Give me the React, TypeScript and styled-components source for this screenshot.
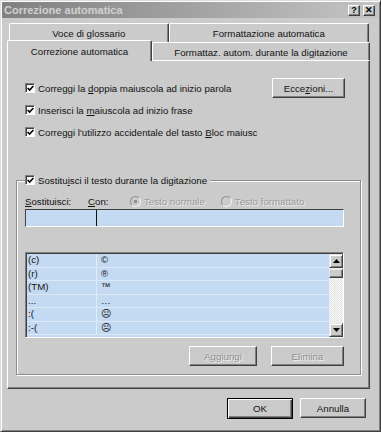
import styled, { createGlobalStyle } from 'styled-components';

const face = '#cbcbcb';
const shadow = '#808080';
const dark = '#404040';
const field = '#c4daf2';

const replacements = [
  { from: '(c)', to: '©' },
  { from: '(r)', to: '®' },
  { from: '(TM)', to: '™' },
  { from: '...', to: '…' },
  { from: ':(', to: '☹' },
  { from: ':-(', to: '☹' },
];

const GlobalStyle = createGlobalStyle`
  html, body {
    margin: 0;
    padding: 0;
    background: ${face};
  }
  body {
    font-family: "Liberation Sans", Arial, sans-serif;
    font-size: 9.7px;
    color: #111;
  }
  * {
    box-sizing: border-box;
  }
`;

const Window = styled.div`
  width: 381px;
  height: 432px;
  background: ${face};
  border: 1px solid;
  border-color: #dcdcdc ${dark} ${dark} #dcdcdc;
  box-shadow: inset 1px 1px #fff, inset -1px -1px ${shadow};
  padding: 1px;
  display: flex;
  flex-direction: column;
`;

const TitleBar = styled.div`
  height: 16px;
  display: flex;
  align-items: center;
  justify-content: space-between;
  padding: 0 4px 0 2px;
  background: linear-gradient(to right, #808080, #c4c4c4);
  color: #d2d2d2;
  font-size: 11px;
  font-weight: 700;
`;

const TitleButtons = styled.div`
  display: flex;
  gap: 3px;
`;

const TitleButton = styled.span`
  width: 12px;
  height: 11px;
  display: flex;
  align-items: center;
  justify-content: center;
  background: ${face};
  border: 1px solid;
  border-color: #fff ${dark} ${dark} #fff;
  box-shadow: inset -1px -1px ${shadow};
  color: #000;
  font-size: 9px;
  font-weight: 700;
  line-height: 1;
`;

const Body = styled.div`
  flex: 1;
  display: flex;
  flex-direction: column;
  padding: 5px 9px 0 5px;
`;

const TabRow = styled.div<{ $front?: boolean }>`
  display: flex;
  align-items: flex-end;
  height: ${p => (p.$front ? 21 : 19)}px;
  margin: ${p => (p.$front ? '-2px 0 -1px 0' : '0 1px 0 2px')};
`;

const Tab = styled.div<{ $width: number; $selected?: boolean }>`
  width: ${p => p.$width}px;
  height: ${p => (p.$selected ? 21 : 19)}px;
  display: flex;
  align-items: center;
  justify-content: center;
  padding-top: ${p => (p.$selected ? 1 : 0)}px;
  background: ${face};
  border-top: 1px solid #fff;
  border-left: 1px solid #fff;
  border-right: 1px solid ${dark};
  border-radius: 2px 2px 0 0;
  box-shadow: inset -1px 0 ${shadow};
  position: ${p => (p.$selected ? 'relative' : 'static')};
  z-index: ${p => (p.$selected ? 1 : 'auto')};
`;

const Panel = styled.div`
  height: 329px;
  border: 1px solid;
  border-color: #fff ${dark} ${dark} #fff;
  box-shadow: inset -1px -1px ${shadow};
  display: flex;
  flex-direction: column;
`;

const Options = styled.div`
  padding: 16px 24px 0 17px;
  display: flex;
  flex-direction: column;
`;

const OptionRow = styled.div`
  height: 22px;
  display: flex;
  align-items: center;
  justify-content: space-between;
`;

const CheckLabel = styled.label`
  display: flex;
  align-items: center;
  white-space: nowrap;
`;

const CheckBox = styled.span`
  width: 10px;
  height: 10px;
  flex: none;
  display: inline-flex;
  align-items: center;
  justify-content: center;
  background: #fff;
  border: 1px solid;
  border-color: ${shadow} #fff #fff ${shadow};
  box-shadow: inset 1px 1px ${dark};
  margin-right: 3px;
`;

const Key = styled.u`
  text-decoration: underline;
`;

const Button = styled.button<{ $width: number; $default?: boolean }>`
  width: ${p => p.$width}px;
  height: ${p => (p.$default ? 21 : 20)}px;
  padding: 0;
  background: ${face};
  font-family: inherit;
  font-size: 9.7px;
  color: #111;
  border: 1px solid;
  border-color: ${p => (p.$default ? '#000' : `#fff ${dark} ${dark} #fff`)};
  box-shadow: ${p =>
    p.$default
      ? `inset 1px 1px #fff, inset -1px -1px ${dark}, inset -2px -2px ${shadow}`
      : `inset -1px -1px ${shadow}`};
  &:disabled {
    color: #8e8e8e;
    text-shadow: 1px 1px #f4f4f4;
  }
`;

const Group = styled.fieldset`
  margin: 31px 8px 0 8px;
  padding: 0 16px 8px 8px;
  border: 1px solid #8c8c8c;
  box-shadow: 1px 1px #fff, inset 1px 1px #fff;
  display: flex;
  flex-direction: column;
`;

const Legend = styled.legend`
  padding: 0 3px 0 0;
  height: 12px;
  background: ${face};
  display: flex;
  align-items: center;
`;

const LabelRow = styled.div`
  margin-top: 9px;
  height: 12px;
  display: flex;
  align-items: center;
  white-space: nowrap;
`;

const FieldLabel = styled.span<{ $width: number }>`
  width: ${p => p.$width}px;
`;

const Radio = styled.span<{ $on?: boolean }>`
  display: flex;
  align-items: center;
  color: #9a9a9a;
  text-shadow: 1px 1px #eee;
  margin-right: 16px;
  &::before {
    content: '';
    width: 9px;
    height: 9px;
    margin-right: 3px;
    border-radius: 50%;
    border: 1px solid #8e8e8e;
    border-right-color: #f2f2f2;
    border-bottom-color: #f2f2f2;
    background: radial-gradient(circle, ${p => (p.$on ? '#8e8e8e 1.6px' : 'transparent 0')}, ${face} 2px);
  }
`;

const Inputs = styled.div`
  margin-top: 2px;
  height: 18px;
  display: flex;
  background: ${field};
  border-top: 1px solid ${dark};
  border-left: 1px solid ${dark};
  border-bottom: 1px solid #fff;
  border-right: 1px solid #fff;
`;

const Input = styled.div<{ $width?: number }>`
  ${p => (p.$width ? `width: ${p.$width}px;` : 'flex: 1;')}
  & + & {
    border-left: 1px solid #111;
  }
`;

const List = styled.div`
  margin-top: 25px;
  height: 86px;
  display: flex;
  background: ${field};
  border: 1px solid;
  border-color: ${shadow} #fff #fff ${shadow};
  box-shadow: inset 1px 1px ${dark};
  padding: 1px 0 0 1px;
`;

const Rows = styled.div`
  flex: 1;
`;

const Row = styled.div`
  height: 13.5px;
  display: grid;
  grid-template-columns: 70px 1fr;
  border-bottom: 1px solid #dce8f5;
  line-height: 12.5px;
`;

const Cell = styled.span<{ $first?: boolean }>`
  padding-left: ${p => (p.$first ? 1 : 4)}px;
  border-right: ${p => (p.$first ? '1px solid #e2ecf7' : 'none')};
`;

const ScrollBar = styled.div`
  width: 14px;
  display: flex;
  flex-direction: column;
  background: repeating-conic-gradient(#e6e6e6 0 25%, #f6f6f6 0 50%) 0 0 / 2px 2px;
`;

const ScrollButton = styled.div`
  height: 14px;
  display: flex;
  align-items: center;
  justify-content: center;
  background: ${face};
  border: 1px solid;
  border-color: #e8e8e8 ${dark} ${dark} #e8e8e8;
  box-shadow: inset 1px 1px #fff, inset -1px -1px ${shadow};
`;

const Thumb = styled.div`
  height: 9px;
  margin-top: 1px;
  background: ${face};
  border: 1px solid;
  border-color: #e8e8e8 ${dark} ${dark} #e8e8e8;
  box-shadow: inset -1px -1px ${shadow};
`;

const Spacer = styled.div`
  flex: 1;
`;

const ButtonRow = styled.div`
  margin-top: 8px;
  display: flex;
  justify-content: flex-end;
  gap: 14px;
`;

const Footer = styled.div`
  margin-top: 9px;
  display: flex;
  justify-content: flex-end;
  gap: 7px;
  padding-right: 4px;
`;

const Check = () => (
  <CheckBox>
    <svg width="7" height="7" viewBox="0 0 7 7">
      <polyline points="0.6,3 2.6,5 6.4,1" fill="none" stroke="#000" strokeWidth="1.6" />
    </svg>
  </CheckBox>
);

const Arrow = ({ down }: { down?: boolean }) => (
  <svg width="7" height="4" viewBox="0 0 7 4">
    <polygon points={down ? '0,0 7,0 3.5,4' : '0,4 7,4 3.5,0'} fill="#000" />
  </svg>
);

const App = () => {
  return (
    <>
      <GlobalStyle />
      <Window>
        <TitleBar>
          <span>Correzione automatica</span>
          <TitleButtons>
            <TitleButton>?</TitleButton>
            <TitleButton>✕</TitleButton>
          </TitleButtons>
        </TitleBar>
        <Body>
          <TabRow>
            <Tab $width={160}>Voce di glossario</Tab>
            <Tab $width={201}>Formattazione automatica</Tab>
          </TabRow>
          <TabRow $front>
            <Tab $width={145} $selected>
              Correzione automatica
            </Tab>
            <Tab $width={218}>Formattaz. autom. durante la digitazione</Tab>
          </TabRow>
          <Panel>
            <Options>
              <OptionRow>
                <CheckLabel>
                  <Check />
                  <span>
                    Correggi la <Key>d</Key>oppia maiuscola ad inizio parola
                  </span>
                </CheckLabel>
                <Button $width={73}>
                  Ecce<Key>z</Key>ioni...
                </Button>
              </OptionRow>
              <OptionRow>
                <CheckLabel>
                  <Check />
                  <span>
                    Inserisci la <Key>m</Key>aiuscola ad inizio frase
                  </span>
                </CheckLabel>
              </OptionRow>
              <OptionRow>
                <CheckLabel>
                  <Check />
                  <span>
                    Correggi l'utilizzo accidentale del tasto <Key>B</Key>loc maiusc
                  </span>
                </CheckLabel>
              </OptionRow>
            </Options>
            <Group>
              <Legend>
                <Check />
                <span>
                  Sostitu<Key>i</Key>sci il testo durante la digitazione
                </span>
              </Legend>
              <LabelRow>
                <FieldLabel $width={63}>
                  <Key>S</Key>ostituisci:
                </FieldLabel>
                <FieldLabel $width={42}>
                  <Key>C</Key>on:
                </FieldLabel>
                <Radio $on>Testo normale</Radio>
                <Radio>Testo formattato</Radio>
              </LabelRow>
              <Inputs>
                <Input $width={70} />
                <Input />
              </Inputs>
              <List>
                <Rows>
                  {replacements.map(r => (
                    <Row key={r.from}>
                      <Cell $first>{r.from}</Cell>
                      <Cell>{r.to}</Cell>
                    </Row>
                  ))}
                </Rows>
                <ScrollBar>
                  <ScrollButton>
                    <Arrow />
                  </ScrollButton>
                  <Thumb />
                  <Spacer />
                  <ScrollButton>
                    <Arrow down />
                  </ScrollButton>
                </ScrollBar>
              </List>
              <ButtonRow>
                <Button $width={68} disabled>
                  Aggiungi
                </Button>
                <Button $width={73} disabled>
                  Elimina
                </Button>
              </ButtonRow>
            </Group>
          </Panel>
          <Footer>
            <Button $width={66} $default>
              OK
            </Button>
            <Button $width={66}>Annulla</Button>
          </Footer>
        </Body>
      </Window>
    </>
  );
};

export default App;
